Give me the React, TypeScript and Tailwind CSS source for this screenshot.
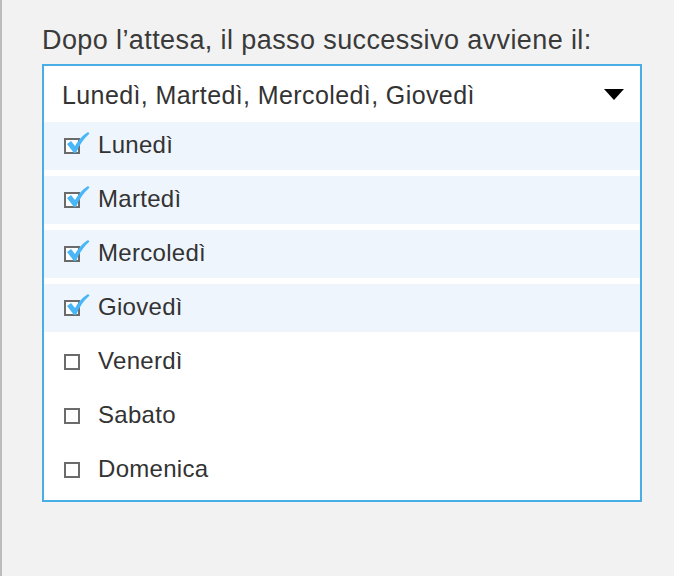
import React from 'react';

const days = [
  { name: 'Lunedì', checked: true },
  { name: 'Martedì', checked: true },
  { name: 'Mercoledì', checked: true },
  { name: 'Giovedì', checked: true },
  { name: 'Venerdì', checked: false },
  { name: 'Sabato', checked: false },
  { name: 'Domenica', checked: false },
];

const Check: React.FC<{ checked: boolean }> = ({ checked }) => (
  <span className="relative block w-[16px] h-[16px] shrink-0">
    <span className="absolute inset-0 border-2 border-[#6b6b6b] bg-white" />
    {checked && (
      <svg viewBox="0 0 24 24" className="absolute left-[2px] top-[-7px] w-[24px] h-[24px]">
        <path d="M1 13 L5 10 L9 15 Q14 6 22 1 L23.5 2.5 Q15 10 10 22 L8 22 Z" fill="#48b6f7" />
      </svg>
    )}
  </span>
);

export default function App() {
  const selected = days.filter(d => d.checked).map(d => d.name).join(', ');
  return (
    <div className="w-[674px] h-[576px] bg-[#f2f2f2] border-l-2 border-[#bcbcbc] font-['Liberation_Sans',Arial,sans-serif] text-[#333]">
      <div className="pl-[40px] pt-[22px] w-[640px]">
        <p className="text-[27px] leading-[36px] tracking-[0.4px] text-[#3a3a3a] whitespace-nowrap">Dopo l’attesa, il passo successivo avviene il:</p>
        <div className="mt-[6px] border-2 border-[#4aaee6] bg-white">
          <div className="h-[56px] flex items-center justify-between pl-[18px] pr-[16px]">
            <span className="text-[25px] tracking-[0.4px] text-[#333] pt-[4px]">{selected}</span>
            <svg viewBox="0 0 20 11" className="w-[20px] h-[11px]">
              <path d="M0 0 H20 L10 11 Z" fill="#000" />
            </svg>
          </div>
          <ul className="flex flex-col gap-[6px] pb-[6px]">
            {days.map(d => (
              <li
                key={d.name}
                className={`h-[48px] flex items-center gap-[18px] pl-[20px] ${d.checked ? 'bg-[#eff5fd]' : 'bg-white'}`}
              >
                <Check checked={d.checked} />
                <span className="text-[24px] tracking-[0.3px] text-[#333] pb-[3px]">{d.name}</span>
              </li>
            ))}
          </ul>
        </div>
      </div>
    </div>
  );
}
